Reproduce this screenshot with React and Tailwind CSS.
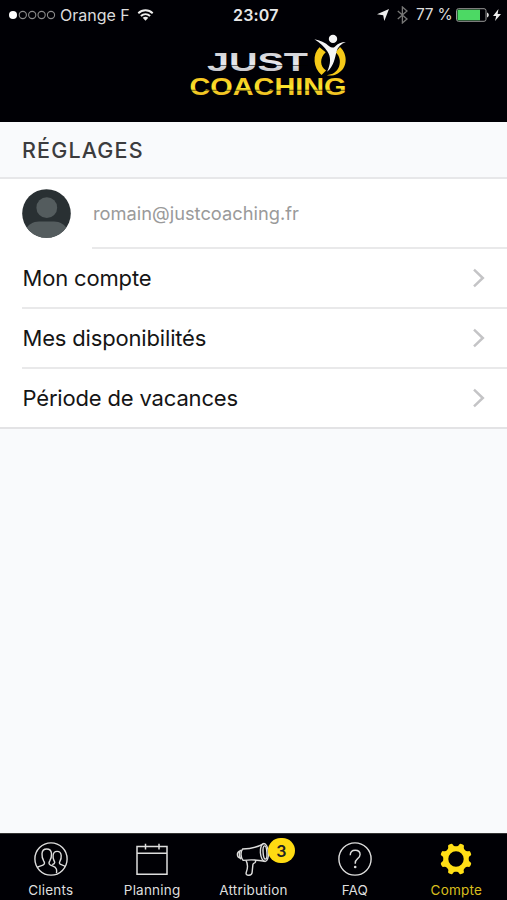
const settings = ['Mon compte', 'Mes disponibilités', 'Période de vacances']

function StatusBar() {
  return (
    <div className="relative flex h-[29px] items-center justify-between pl-[9px] pr-[6px] text-[16px] text-[#dcdcdc]">
      <div className="flex items-center">
        <svg width="47" height="10" viewBox="0 0 47 10" fill="none" stroke="#8a8a8a" strokeWidth="1.1">
          <circle cx="4" cy="5" r="4" fill="#fff" stroke="none" />
          <circle cx="13.8" cy="5" r="3.6" />
          <circle cx="23.2" cy="5" r="3.6" />
          <circle cx="32.6" cy="5" r="3.6" />
          <circle cx="42" cy="5" r="3.6" />
        </svg>
        <span className="ml-[4px] w-[71px] whitespace-nowrap">Orange F</span>
        <svg className="ml-[6px]" width="17" height="12" viewBox="0 0 18 13" fill="none" stroke="#eee" strokeWidth="2.1">
          <path d="M1.2 4.6c4.4-4.2 11.2-4.2 15.6 0" />
          <path d="M4 7.6c2.9-2.7 7.1-2.7 10 0" />
          <path d="M9 12.6 6 9.6c1.8-1.6 4.2-1.6 6 0z" fill="#eee" stroke="none" />
        </svg>
      </div>
      <span className="absolute left-[233px] text-[16px] font-semibold tracking-[0.2px] text-[#e8e8e8]">23:07</span>
      <div className="flex items-center">
        <svg width="12" height="12" viewBox="0 0 12 12" fill="#eee">
          <path d="M12 0 7.3 12 6.2 6.2 0 5.2z" />
        </svg>
        <svg className="ml-[8px]" width="11" height="18" viewBox="0 0 11 18" fill="none" stroke="#777" strokeWidth="1.3">
          <path d="M.8 5 10 13l-4.6 4V1L10 5 .8 13" />
        </svg>
        <span className="ml-[8px] w-[37px] whitespace-nowrap pt-px text-[15.5px] tracking-[-0.2px]">77 %</span>
        <svg className="ml-[3px]" width="34" height="14" viewBox="0 0 34 14">
          <rect x=".5" y=".7" width="29.5" height="12.6" rx="2" fill="none" stroke="#999" />
          <rect x="1.5" y="1.7" width="22.5" height="10.6" fill="#4cd964" />
          <path d="M31 4.5c2.4 1 2.4 4 0 5z" fill="#ddd" />
        </svg>
        <svg className="ml-[3px]" width="8" height="12" viewBox="0 0 8 12" fill="#eee">
          <path d="M5.5 0 0 7h3.2L2 12l6-7H4.6z" />
        </svg>
      </div>
    </div>
  )
}

function Logo() {
  return (
    <svg width="174" height="74" viewBox="181 32 174 74" className="ml-[181px]">
      <defs>
        <linearGradient id="silver" x1="0" y1="0" x2="0" y2="1">
          <stop offset="0" stopColor="#c4c5c9" />
          <stop offset=".55" stopColor="#e9e9ed" />
          <stop offset="1" stopColor="#aaabaf" />
        </linearGradient>
        <linearGradient id="gold" x1="0" y1="0" x2="0" y2="1">
          <stop offset="0" stopColor="#f0b51c" />
          <stop offset=".5" stopColor="#fbe52c" />
          <stop offset="1" stopColor="#e5a31b" />
        </linearGradient>
      </defs>
      <g fontFamily="'Liberation Sans', sans-serif" fontWeight="700">
        <text x="207" y="71" fontSize="26.5" textLength="101" lengthAdjust="spacingAndGlyphs" fill="url(#silver)">JUST</text>
        <text x="189.5" y="95" fontSize="23.5" textLength="157" lengthAdjust="spacingAndGlyphs" fill="url(#gold)">COACHING</text>
      </g>
      <path d="M206 65.5h102M189 90.3h158" stroke="#000" strokeWidth=".9" opacity=".6" />
      <path d="M319.5 47.2c-7.4 7-6.3 21 2 27.7l4.6-4.4c-6.3-4.2-6.7-12.4-.4-18.2z" fill="#f5c918" />
      <path d="M340 47c8.2 7.6 7.7 21.2-2.2 26.4-4 2.3-7.8 2.6-11 1.8 5.8-.6 10-3.1 12.2-8.4 1.9-5.1.8-11-3.4-14.5z" fill="#f5c918" />
      <path d="M314.4 39.2c5.4 1.2 11 3.1 15.2 7.4 1.5 1.4 4.2 1.3 5.5-.2 2.8-2.9 6-4.1 10.7-4.3-4.7 1.8-8 4.9-9.2 9.2-1.8 7.3-2.9 15.2-9.5 20.5 3.9-8.2 3.8-15 .5-20-3.1-4.7-7.6-9.4-13.2-12.6z" fill="#f5f5f5" />
      <circle cx="333" cy="38.9" r="4.2" fill="#f5f5f5" />
    </svg>
  )
}

function Avatar() {
  return (
    <svg width="49" height="49" viewBox="0 0 49 49">
      <clipPath id="face"><circle cx="24.5" cy="24.5" r="24.3" /></clipPath>
      <g clipPath="url(#face)">
        <rect width="49" height="49" fill="#293033" />
        <circle cx="24.8" cy="18.7" r="10.4" fill="#545c5e" />
        <path d="M4 49v-9c2-4 7-7.4 13-7.4h15c6 0 11 3.4 13 7.4v9z" fill="#545c5e" />
      </g>
    </svg>
  )
}

function SettingsRow({ label, last }) {
  return (
    <div className={last ? 'border-b-2 border-[#e3e3e5]' : ''}>
      <div className={`ml-[22px] flex items-center justify-between pr-[22px] ${last ? 'h-[58px]' : 'h-[60px] border-b-2 border-[#e9e9ea]'}`}>
        <span className="pl-[0.5px] text-[22px] tracking-[-0.17px] text-[#151515]">{label}</span>
        <svg width="13" height="20" viewBox="0 0 13 20" fill="none" stroke="#c4c4c6" strokeWidth="2.5">
          <path d="m2 1.7 8.8 8.3L2 18.3" />
        </svg>
      </div>
    </div>
  )
}

function ClientsIcon() {
  return (
    <svg width="36" height="36" viewBox="0 0 36 36" fill="none" stroke="#ddd" strokeWidth="1.4" strokeLinejoin="round">
      <circle cx="18" cy="18" r="16.1" />
      <path d="M4.4 26.4c1.6-1.4 4-1.5 5.9-2.5 1.5-.8 1.5-2.3.5-3.8-1.5-2.4-2-4.7-1.8-7.3.2-3 2-4.8 4.7-4.8s4.6 1.8 4.8 4.8c.2 2.6-.3 4.9-1.8 7.3-1 1.5-1 3 .5 3.8 2.8 1.4 5.4 1.4 6.2 4.2.3 1.1.3 2.9.1 4.1" />
      <path d="M20.6 18.5c-.5-1.3-.6-2.6-.5-4 .2-2.5 1.8-4.1 4-4.1s3.9 1.6 4.1 4.1c.2 2.2-.2 4.1-1.3 5.9-.8 1.3-.6 2.4.7 3 1.6.8 3.2.8 4.5 2M20.6 18.5c.3 1.2 1 1.8 1.1 2.9 0 1.2-1.1 1.8-2.5 2.2" />
    </svg>
  )
}

function PlanningIcon() {
  return (
    <svg width="36" height="36" viewBox="0 0 36 36" fill="none" stroke="#ddd" strokeWidth="1.5">
      <path d="M3 5.6h30v27.6H3zM3 12.2h30M11.5 2.8v5.7M25 2.8v5.7" />
    </svg>
  )
}

function MegaphoneIcon() {
  return (
    <svg width="36" height="36" viewBox="0 0 36 36" fill="none" stroke="#ddd" strokeWidth="1.4" strokeLinejoin="round">
      <ellipse cx="29.4" cy="11.5" rx="4" ry="9" transform="rotate(-4 29.4 11.5)" />
      <ellipse cx="30" cy="11.5" rx="1.9" ry="6.6" transform="rotate(-4 30 11.5)" />
      <path d="M28.2 2.8C22.2 6.3 16 8 7.6 8c-2.3 2.5-2.1 8.7.6 11.4 7.6-1 14.4-.6 21.4.9" />
      <path d="M5.6 8.9c-1.8 2.6-1.5 6.9.6 9.3M5 9.9c-1.8.7-2.7 2-2.6 3.8.1 1.7 1.1 3 3 3.6" />
      <path d="M11 19.3c2 3.7 1.7 8.3.3 12-.7 1.9.3 2.9 2.6 2.9s3-.8 3.2-2.5l.8-8.1c.1-1.2.8-1.5 1.7-1.8 1.1-.4 1.3-1.6.6-2.7" />
    </svg>
  )
}

function FaqIcon() {
  return (
    <svg width="36" height="36" viewBox="0 0 36 36" fill="none" stroke="#ddd" strokeWidth="1.4">
      <circle cx="18" cy="18" r="16.1" />
      <path d="M13.2 14.3c.1-3.2 2-5 5-5 2.9 0 4.9 1.7 4.9 4.3 0 2.2-1.2 3.2-2.7 4.3-1.6 1.2-2.2 2.1-2.2 4.8" />
      <circle cx="18.2" cy="26" r="1.3" fill="#ddd" stroke="none" />
    </svg>
  )
}

const teeth = [22.5, 67.5, 112.5, 157.5, 202.5, 247.5, 292.5, 337.5]

function GearIcon() {
  return (
    <svg width="36" height="36" viewBox="-18 -18 36 36" fill="#ffdf16">
      <circle r="10.2" fill="none" stroke="#ffdf16" strokeWidth="5" />
      {teeth.map(angle => (
        <path key={angle} d="M-4.6-11.2Q-2.7-12.5-2.3-15.2-2-16 0-16T2.3-15.2Q2.7-12.5 4.6-11.2z" transform={`rotate(${angle})`} />
      ))}
    </svg>
  )
}

const tabs = [
  { label: 'Clients', Icon: ClientsIcon },
  { label: 'Planning', Icon: PlanningIcon },
  { label: 'Attribution', Icon: MegaphoneIcon, badge: 3 },
  { label: 'FAQ', Icon: FaqIcon },
  { label: 'Compte', Icon: GearIcon, active: true },
]

export default function App() {
  return (
    <div className="flex h-[900px] w-[507px] flex-col overflow-hidden bg-[#f9fafc] font-['Inter','Liberation_Sans',sans-serif]">
      <header className="h-[122px] shrink-0 bg-[#000005]">
        <StatusBar />
        <div className="pt-[3px]">
          <Logo />
        </div>
      </header>

      <main className="flex-1">
        <h1 className="flex h-[57px] items-center border-b-2 border-[#e7e7e9] pl-[22px] pt-px text-[21.5px] font-medium tracking-[1.15px] text-[#3c3c3e]">
          RÉGLAGES
        </h1>
        <div className="bg-white">
          <div className="flex h-[70px] pl-[22px]">
            <div className="w-[70px] shrink-0 pt-[10px]">
              <Avatar />
            </div>
            <div className="flex flex-1 items-center border-b-2 border-[#e9e9ea] pl-px pt-[2px] text-[18.3px] text-[#9a9a9a]">
              romain@justcoaching.fr
            </div>
          </div>
          {settings.map((label, i) => (
            <SettingsRow key={label} label={label} last={i === settings.length - 1} />
          ))}
        </div>
      </main>

      <nav className="grid h-[67px] shrink-0 grid-cols-5 border-t border-[#333] bg-[#000005]">
        {tabs.map(({ label, Icon, badge, active }) => (
          <div key={label} className="relative flex flex-col items-center pt-[7px]">
            <Icon />
            <span className={`mt-[3px] text-[13.5px] leading-[20px] tracking-[0.2px] ${active ? 'text-[#d8be1e]' : 'text-[#dedede]'}`}>{label}</span>
            {badge && (
              <span className="absolute left-[65px] top-[4px] flex h-[25px] w-[27px] items-center justify-center rounded-full bg-[#ffdb12] text-[16px] font-semibold text-[#222]">
                {badge}
              </span>
            )}
          </div>
        ))}
      </nav>
    </div>
  )
}
